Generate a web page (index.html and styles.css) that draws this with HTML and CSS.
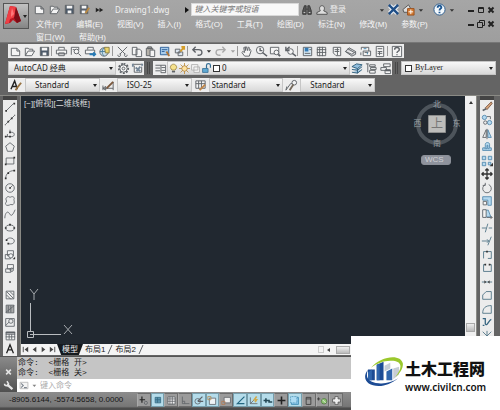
FILE: index.html
```html
<!DOCTYPE html>
<html lang="zh-CN">
<head>
<meta charset="utf-8">
<meta name="viewport" content="width=device-width, initial-scale=1">
<title>Drawing1.dwg</title>
<link rel="stylesheet" href="styles.css">
</head>
<body>
<svg class="sprite" aria-hidden="true">
  <symbol id="new" viewBox="0 0 14 14"><path class="w" d="M2.500 3.500h6l3 3v5h-9zM8.500 3.500v3h3"/></symbol>
  <symbol id="open" viewBox="0 0 14 14"><path class="w" d="M2.500 11.500v-8h3l1 1h4v2M2.500 11.500l3-5h7l-3 5z"/></symbol>
  <symbol id="save" viewBox="0 0 14 14"><path fill="#4c5968" d="M2.500 2.500h9v9h-9z"/><path class="w" stroke="none" d="M4 3h6v3H4zM5 8h4v3H5z"/></symbol>
  <symbol id="saveas" viewBox="0 0 14 14"><path fill="#59616c" d="M2.500 2.500h8v9h-8z"/><path class="w" stroke="none" d="M4 3h5v3H4zM4 8h4v3H4z"/><path stroke="#b98942" stroke-width="2" d="M12 5l-4 6"/></symbol>
  <symbol id="print" viewBox="0 0 14 14"><path class="w" d="M4 5V2.500h6V5M1.500 5.500h11v4h-11zM4 8.500h6v3H4z"/></symbol>
  <symbol id="preview" viewBox="0 0 14 14"><path class="w" d="M2.500 10.500v-8h8v3"/><circle class="w" cx="8" cy="7" r="2.500"/><path d="M10 9l3 3M4 5h2"/></symbol>
  <symbol id="publish" viewBox="0 0 14 14"><path class="w" d="M4 5V2.500h6V5M1.500 5.500h10v4h-10z"/><path stroke="#267ab5" stroke-width="2" d="M6 10h6M10 8l2 2-2 2"/></symbol>
  <symbol id="dwf" viewBox="0 0 14 14"><circle fill="#c7dce8" cx="6.500" cy="7.500" r="4.500"/><path stroke="#4b7e9d" d="M2 7h9M6.500 3c-3 3-2 7 0 9"/><path fill="#ead36b" stroke="#887d45" d="M7 2.500h5v6H8z"/></symbol>
  <symbol id="cut" viewBox="0 0 14 14"><path d="M2 2l8 8M12 2l-8 8M2 10.500a1.500 1.500 0 1 0 2-1M10 9.500a1.500 1.500 0 1 0 2 1"/></symbol>
  <symbol id="copy" viewBox="0 0 14 14"><path class="w" d="M2.500 2.500h5v8h-5zM6.500 4.500h4l2 2v6h-6z"/></symbol>
  <symbol id="paste" viewBox="0 0 14 14"><path fill="#b5b1a9" d="M2.500 3.500h7v8h-7zM4 2h4v2H4z"/><path class="w" d="M6.500 5.500h5v7h-5z"/></symbol>
  <symbol id="match" viewBox="0 0 14 14"><path fill="#a8cceb" stroke="#2c5f98" d="M1.500 2.500h9v8h-9z"/><path stroke="#2c5f98" d="M3 5h6M3 7h3"/><path stroke="#b17535" stroke-width="2" d="M8 7l3 5"/></symbol>
  <symbol id="block" viewBox="0 0 14 14"><path fill="#dce5ef" d="M2.500 4.500h5v4h-5zM5.500 7.500h5v4h-5z"/><path stroke="#d49d29" stroke-width="2" d="M8 7l4-5M9 2h3v3"/></symbol>
  <symbol id="undo" viewBox="0 0 14 14"><path stroke-width="1.500" d="M5 2L2 5l3 3M2 5h6c5 0 5 6 0 6H7"/></symbol>
  <symbol id="redo" viewBox="0 0 14 14"><path stroke="#aaa" stroke-width="1.500" d="M9 2l3 3-3 3M12 5H6C1 5 1 11 6 11h1"/></symbol>
  <symbol id="down" viewBox="0 0 8 14"><path fill="#333" stroke="none" d="M2 6h5L4.500 9z"/></symbol>
  <symbol id="pan" viewBox="0 0 14 14"><path class="w" d="M5 12L2 8l1-1 2 1-1-5 1-1 1 4V2h1l1 4 1-4 1 1v3l1-1 1 1-2 6z"/></symbol>
  <symbol id="zoomrt" viewBox="0 0 14 14"><circle class="w" cx="5.500" cy="5.500" r="4"/><path stroke-width="1.500" d="M8 8l5 4M5.500 3v3H8"/></symbol>
  <symbol id="zoomwin" viewBox="0 0 14 14"><path class="w" d="M1.500 2.500h9v7h-9z"/><circle class="w" cx="8" cy="8" r="2.500"/><path stroke-width="2" d="M10 10l2 2"/></symbol>
  <symbol id="zoomprev" viewBox="0 0 14 14"><circle class="w" cx="7" cy="7" r="3"/><path stroke-width="1.500" d="M9 9l4 3M2 2v4h4M2 6l4-4"/></symbol>
  <symbol id="props" viewBox="0 0 14 14"><path fill="#d7e9f5" d="M2.500 2.500h9v9h-9z"/><path fill="#347bb5" stroke="none" d="M4 3h4v4H4z"/><path d="M4 9h6M9 5h2"/></symbol>
  <symbol id="grid" viewBox="0 0 14 14"><path class="w" d="M2.500 2.500h9v9h-9zM2 5h10M2 8h10M5 2v10M8 2v10"/></symbol>
  <symbol id="palette" viewBox="0 0 14 14"><path class="w" d="M3.500 2.500h8v9h-5l-3-3z"/><path d="M5 5h5M5 7h5M8 3v8"/></symbol>
  <symbol id="sheets" viewBox="0 0 14 14"><path fill="#d5d6d9" d="M1.500 7l4-4 7 4v3l-4 2zM1.500 7l7 3 4-3M4 4l7 4"/></symbol>
  <symbol id="markup" viewBox="0 0 14 14"><path class="w" d="M2.500 5V2.500h8v4M4.500 6.500h8v5h-8zM2 8v3M6 8h4"/><path stroke="#397fac" d="M5 4h3M9 8v2"/></symbol>
  <symbol id="calc" viewBox="0 0 14 14"><path class="w" d="M3.500 1.500h8v11h-8zM5 4h5M5 7h5M5 9h5M7 7v4"/></symbol>
  <symbol id="help" viewBox="0 0 14 14"><path class="w" d="M2.500 1.500h10v11h-10z"/><path stroke-width="1.500" d="M5 5c0-3 5-3 5 0 0 2-2.500 1.500-2.500 3.500M7.500 10v1"/></symbol>
  <symbol id="gear" viewBox="0 0 14 14"><path stroke-width="2" stroke-dasharray="2 1.500" d="M7 2a5 5 0 1 1 0 10A5 5 0 1 1 7 2"/><circle class="w" cx="7" cy="7" r="4"/><circle cx="7" cy="7" r="1.500"/></symbol>
  <symbol id="wsave" viewBox="0 0 14 14"><path class="w" d="M2 2.500h10M3.500 4v7h8V5"/><path stroke="#758798" stroke-width="2" d="M5 6l5 4M10 5l-4 5M2 2v3M12 2v2"/></symbol>
  <symbol id="layers" viewBox="0 0 14 14"><path class="w" d="M1.500 3.500h6M1.500 6.500h5M1.500 9.500h5M7.500 3.500h5v8h-5zM8 6h4M8 9h4"/></symbol>
  <symbol id="layer2" viewBox="0 0 14 14"><path fill="#92bedd" stroke="#35617c" d="M1 5l5-3 6 1-5 4zM1 8l6 1 5-4M1 11l6 1 5-4M7 7v5"/></symbol>
  <symbol id="layer3" viewBox="0 0 14 14"><path class="w" d="M5 3h6v2H5zM6 6h6v2H6zM5 9h6v3H5zM1 2h3M3 2v9"/></symbol>
  <symbol id="layer4" viewBox="0 0 14 14"><path class="w" d="M5 2h7v3H5zM2 6h6v3H2zM6.500 8.500h6v4h-6z"/><path stroke-width="2" d="M7 9h5"/></symbol>
  <symbol id="bulb" viewBox="0 0 14 14"><path fill="#f6e28c" stroke="#99813c" d="M5 9L3 6c0-6 8-6 8 0L9 9z"/><path stroke-width="2" d="M5 11h4"/></symbol>
  <symbol id="sun" viewBox="0 0 14 14"><path stroke="#bb8730" d="M7 0v14M0 7h14M2 2l10 10M12 2L2 12"/><circle fill="#ffe3a0" stroke="#aa8040" cx="7" cy="7" r="3.500"/></symbol>
  <symbol id="vp" viewBox="0 0 14 14"><path class="w" stroke="#aaa" d="M2 2h8v7H2zM5 5h7v7H5z"/></symbol>
  <symbol id="lock" viewBox="0 0 14 14"><path stroke="#356e94" stroke-width="1.500" d="M7 7V3c0-3 5-3 5 0v3"/><path fill="#5fa9d3" stroke="#356e94" d="M2 7h7v5H2z"/></symbol>
  <symbol id="brushA" viewBox="0 0 14 14"><path stroke="#222" stroke-width="1.500" d="M1 11l4-9 3 9M2 8h5"/><path stroke="#987342" stroke-width="2" d="M12 4L8 9M8 9l-2 3"/></symbol>
  <symbol id="dimbrush" viewBox="0 0 14 14"><path d="M1 10h11M1 7v5M12 3v9M1 10l3-2v4z"/><path stroke="#7b583d" stroke-width="2" d="M12 3L7 8l-2 2"/></symbol>
  <symbol id="tablebrush" viewBox="0 0 14 14"><path class="w" d="M2 2h10v8H2zM2 5h10M5 2v8M8 2v8"/><path stroke="#bf8547" stroke-width="2" d="M12 6L8 10l-2 2"/></symbol>
  <symbol id="leader" viewBox="0 0 14 14"><path d="M1 12l5-7h2M1 12l1-4"/><circle class="w" cx="10" cy="4" r="2.500"/><path stroke-width="2" stroke="#75695b" d="M9 6l-4 6"/></symbol>

  <symbol id="line" viewBox="0 0 14 14"><path d="M3 11l8-8"/><path class="dot" d="M1.500 10.500h2v2h-2zM11 2h2v2h-2z"/></symbol>
  <symbol id="xline" viewBox="0 0 14 14"><path d="M2 12L12 2"/><path class="dot" d="M4 8h2v2H4zM8 4h2v2H8zM1 12h1v1H1zM12 1h1v1h-1z"/></symbol>
  <symbol id="pline" viewBox="0 0 14 14"><path d="M2 10h7c4 0 4-5 0-5H7V2M4 7v3"/><path class="dot" d="M1 9h2v2H1zM6 4h2v2H6zM6 9h2v2H6z"/></symbol>
  <symbol id="poly" viewBox="0 0 14 14"><path d="M7 2l5 4-2 6H4L2 6z"/></symbol>
  <symbol id="rect" viewBox="0 0 14 14"><path d="M2.500 3.500h9v7h-9z"/><path class="dot" d="M1 10h2v2H1zM11 2h2v2h-2z"/></symbol>
  <symbol id="arc" viewBox="0 0 14 14"><path d="M2 12c0-5 4-9 10-9"/><path class="dot" d="M1 11h2v2H1zM4 5h2v2H4zM11 2h2v2h-2z"/></symbol>
  <symbol id="circle" viewBox="0 0 14 14"><circle cx="7" cy="7" r="5"/><path d="M7 7l3-3"/><path class="dot" d="M6 6h2v2H6z"/></symbol>
  <symbol id="cloud" viewBox="0 0 14 14"><path d="M3 3c2-2 3-1 4 0 2-2 5-1 5 1-1 2 0 2 0 4 0 3-2 4-4 3-2 1-5 2-6 0-1-2 1-2 1-4-1-2-1-3 0-4z"/></symbol>
  <symbol id="spline" viewBox="0 0 14 14"><path d="M1 12c0-6 3-9 5-6s3 5 7-4"/></symbol>
  <symbol id="ellipse" viewBox="0 0 14 14"><ellipse cx="7" cy="7" rx="5" ry="3.500"/><path class="dot" d="M1 6h2v2H1zM11 6h2v2h-2zM6 2h2v2H6z"/></symbol>
  <symbol id="earc" viewBox="0 0 14 14"><path d="M3 6c1-4 9-3 9 1 0 3-4 4-7 3"/><path class="dot" d="M2 5h2v2H2zM4 9h2v2H4z"/></symbol>
  <symbol id="insert" viewBox="0 0 14 14"><path class="w" d="M4 2h7v6H4zM1.500 6.500h6v5h-6z"/><circle class="w" cx="8" cy="8" r="2.500"/><path class="dot" d="M10 12l3-3v3z"/></symbol>
  <symbol id="make" viewBox="0 0 14 14"><path class="w" d="M4 3h7v5H4zM2 8h6v4H2z"/><circle cx="9" cy="9" r="2"/></symbol>
  <symbol id="point" viewBox="0 0 14 14"><path class="dot" d="M6 6h2v2H6z"/></symbol>
  <symbol id="hatch" viewBox="0 0 14 14"><path d="M2.500 2.500h9v9h-9zM3 7l5 5M3 3l8 8M7 3l4 4"/></symbol>
  <symbol id="grad" viewBox="0 0 14 14"><path fill="#aaa" d="M2.500 2.500h9v9h-9z"/><path d="M5 3v8M8 3v8M2 11L12 3"/></symbol>
  <symbol id="region" viewBox="0 0 14 14"><path d="M2 3h10v9H2z"/><circle cx="8" cy="6" r="2.500"/><path d="M2 11l4-4"/></symbol>
  <symbol id="table" viewBox="0 0 14 14"><path class="w" d="M2.500 2.500h10v9h-10zM2 5h11M2 8h11M6 5v6M9 5v6"/><path stroke-width="2" d="M2 3h11"/></symbol>
  <symbol id="textA" viewBox="0 0 14 14"><path stroke="#222" stroke-width="1.500" d="M3 12L7 2l4 10M5 8h5"/></symbol>

  <symbol id="erase" viewBox="0 0 14 14"><path fill="#d7a37c" stroke="#76533d" d="M12 1L5 8l2 2 6-7z"/><path stroke-width="2" d="M2 11l4-2"/></symbol>
  <symbol id="copyo" viewBox="0 0 14 14"><circle class="b" cx="4" cy="4" r="2.500"/><circle class="b" cx="10" cy="10" r="2.500"/><circle cx="5" cy="10" r="2"/><path d="M7 3h4v3"/></symbol>
  <symbol id="mirror" viewBox="0 0 14 14"><path class="w" d="M6 2v9H2z"/><path class="b" d="M8 2v9h4z"/><path d="M7 1v12"/></symbol>
  <symbol id="offset" viewBox="0 0 14 14"><path class="b" d="M2 11V8h3V4c0-3 5-3 5 0v4h2v3zM4 9h3V5h1v4h2"/></symbol>
  <symbol id="array" viewBox="0 0 14 14"><path class="b" d="M1.500 1.500h4v4h-4zM8.500 1.500h4v4h-4zM1.500 8.500h4v4h-4zM8.500 8.500h3v3h-3z"/><path class="dot" d="M10 13l4-4v4z"/></symbol>
  <symbol id="move" viewBox="0 0 14 14"><path stroke="#333" stroke-width="1.500" d="M7 1v12M1 7h12M5 3l2-2 2 2M5 11l2 2 2-2M3 5L1 7l2 2M11 5l2 2-2 2"/></symbol>
  <symbol id="rotate" viewBox="0 0 14 14"><path d="M5 3a5 5 0 1 0 4 0M5 1v3H2"/></symbol>
  <symbol id="scale" viewBox="0 0 14 14"><path class="b" d="M2 2h10v10H8V6H2z"/><path class="w" d="M2.500 7.500h4v4h-4z"/></symbol>
  <symbol id="stretch" viewBox="0 0 14 14"><path class="b" d="M2.500 2.500h6l3 8h-9z"/><path class="w" d="M2 2h4v9H2z"/><path d="M7 11h6M11 9l2 2-2 2"/></symbol>
  <symbol id="trim" viewBox="0 0 14 14"><path stroke="#4b7083" d="M1 7h5M9 7h4M8 2L5 12"/></symbol>
  <symbol id="extend" viewBox="0 0 14 14"><path stroke="#4b7083" d="M1 7h8M12 2L8 12M7 5l2 2-2 2"/></symbol>
  <symbol id="breakp" viewBox="0 0 14 14"><path stroke="#4b7083" d="M3 11V3h9v8H8"/><path class="dot" d="M6 2h2v2H6z"/></symbol>
  <symbol id="break" viewBox="0 0 14 14"><path stroke="#4b7083" d="M5 3H3v8h9V3h-2"/><path class="dot" d="M4 2h2v2H4zM9 2h2v2H9z"/></symbol>
  <symbol id="join" viewBox="0 0 14 14"><path stroke="#4b7083" d="M1 7h12"/><path class="dot" d="M4 5l2 2-2 2zM10 5L8 7l2 2z"/></symbol>
  <symbol id="chamfer" viewBox="0 0 14 14"><path stroke="#4b7083" d="M2 12V7l4-4h6v9z"/></symbol>
  <symbol id="fillet" viewBox="0 0 14 14"><path stroke="#4b7083" d="M2 12C2 6 5 3 12 3v9z"/></symbol>
  <symbol id="blend" viewBox="0 0 14 14"><path stroke="#376580" stroke-width="1.500" d="M2 3h3v6c2 4 4-4 7-5M2 11h2"/></symbol>
  <symbol id="explode" viewBox="0 0 14 14"><path stroke="#4b7083" d="M2 2l10 10M12 2L2 12M7 1v12"/></symbol>

  <symbol id="infer" viewBox="0 0 14 14"><path stroke="#222" stroke-width="1.500" d="M5 2v8M2 6h7"/><circle cx="10" cy="10" r="2"/></symbol>
  <symbol id="snap" viewBox="0 0 14 14"><path fill="#5893ac" stroke="#376b83" d="M4 3h7v7H4zM4 6h7M7 3v7"/></symbol>
  <symbol id="ortho" viewBox="0 0 14 14"><path d="M3 2v9h9M3 8h3v3"/></symbol>
  <symbol id="polar" viewBox="0 0 14 14"><circle cx="6" cy="8" r="3.500"/><path stroke-width="1.500" d="M6 8l6-6M6 8h7"/></symbol>
  <symbol id="osnap" viewBox="0 0 14 14"><path fill="#eef3f5" d="M3 4h8v8H3z"/><path stroke="#b58b50" d="M1 2h4v4H1z"/></symbol>
  <symbol id="snap3" viewBox="0 0 14 14"><path fill="#eee" d="M4 3h8v7H4z"/><path stroke="#b67c52" d="M1 8h4v4H1z"/></symbol>
  <symbol id="track" viewBox="0 0 14 14"><path stroke="#246781" stroke-width="1.500" d="M12 2L3 11h9"/></symbol>
  <symbol id="ducs" viewBox="0 0 14 14"><path d="M3 3v8h9M3 11l5-5"/><path stroke="#d0a94b" stroke-width="2" d="M11 2L8 6h3L9 9"/></symbol>
  <symbol id="dyn" viewBox="0 0 14 14"><path stroke="#244957" stroke-width="2" d="M2 7h8M5 4v6M8 9h5"/></symbol>
  <symbol id="lwt" viewBox="0 0 14 14"><path stroke="#222" stroke-width="2" d="M2 7h10M7 2v10"/></symbol>
  <symbol id="tpy" viewBox="0 0 14 14"><path fill="#8bc6ea" stroke="#3a87ae" d="M3 3h9v9H3z"/><path fill="#aedcf3" stroke="#3a87ae" stroke-dasharray="1 1" d="M2 2h8v8H2z"/></symbol>
  <symbol id="qp" viewBox="0 0 14 14"><path stroke="#333" d="M4 3h6v9H4zM4 5h6"/></symbol>
  <symbol id="sc" viewBox="0 0 14 14"><path stroke="#333" d="M2 3v4M0 5h4"/><circle fill="#8fc873" stroke="#517444" cx="9" cy="8" r="3.500"/><path stroke="#eee" d="M7 6l4 4"/></symbol>
  <symbol id="am" viewBox="0 0 14 14"><path fill="#eee" stroke="#555" d="M5 2h4v3h3v4H9v3H5V9H2V5h3z"/></symbol>

  <symbol id="min" viewBox="0 0 10 10"><path stroke="#222" stroke-width="2" d="M2 6h6"/></symbol>
  <symbol id="max" viewBox="0 0 10 10"><path stroke="#222" d="M2.500 2.500h5v5h-5zM2 3.500h6"/></symbol>
  <symbol id="restore" viewBox="0 0 10 10"><path stroke="#222" d="M3.500 3V1.500h5v5H7M1.500 3.500h5v5h-5z"/></symbol>
  <symbol id="close" viewBox="0 0 10 10"><path stroke="#222" stroke-width="2" d="M2.500 2.500l5 5M7.500 2.500l-5 5"/></symbol>
  <symbol id="binoc" viewBox="0 0 14 14"><path fill="#555" stroke="#333" d="M2 12V8l2-6h2v10zM8 12V2h2l2 6v4zM6 6h2"/><path stroke="#ddd" d="M3 10h2M9 10h2"/></symbol>
  <symbol id="person" viewBox="0 0 14 14"><path fill="#ddd" stroke="#444" d="M5 8C1 0 13 0 9 8l4 2v2H1v-2z"/></symbol>
  <symbol id="exchange" viewBox="0 0 14 14"><path stroke="#e8eef5" stroke-width="5" d="M3 3l8 8M11 3l-8 8"/><path stroke="#204f87" stroke-width="2.500" d="M2 2l10 10M12 2L2 12"/></symbol>
  <symbol id="a360" viewBox="0 0 14 14"><path fill="#ddd" stroke="#555" d="M1 7l6-5 3 5-3 3H2z"/><path fill="#d47b32" stroke="#9a501c" d="M6 6h7v7H6z"/><path stroke="#fff" d="M9.500 7v5M7 9.500h5"/></symbol>
  <symbol id="q" viewBox="0 0 14 14"><circle fill="#f3f8fc" stroke="#295a8b" cx="7" cy="7" r="6"/><path stroke="#1d5792" stroke-width="2" d="M5 5c0-3 4-3 4 0 0 1-2 1-2 3M7 9.500v1.500"/></symbol>
  <symbol id="wrench" viewBox="0 0 14 14"><path stroke="#e5e5e5" stroke-width="3" d="M5 5l7 6"/><path stroke="#e5e5e5" stroke-width="2" d="M2 4c0 3 5 4 5 0L5 1"/></symbol>
  <symbol id="prompt" viewBox="0 0 14 14"><path class="w" stroke="#aaa" d="M1.500 2.500h11v9h-11z"/><path stroke="#7e8690" stroke-width="1.500" d="M3 4l3 3-3 3M7 10h4"/></symbol>
  <symbol id="first" viewBox="0 0 10 10"><path stroke="#444" d="M2.500 2v6"/><path fill="#444" stroke="none" d="M8 2v6L4 5z"/></symbol>
  <symbol id="prev" viewBox="0 0 10 10"><path fill="#444" stroke="none" d="M7 2v6L3 5z"/></symbol>
  <symbol id="next" viewBox="0 0 10 10"><path fill="#444" stroke="none" d="M3 2v6l4-3z"/></symbol>
  <symbol id="last" viewBox="0 0 10 10"><path stroke="#444" d="M7.500 2v6"/><path fill="#444" stroke="none" d="M2 2v6l4-3z"/></symbol>
</svg>

<div class="app">
  <header class="head">
    <button class="app-btn" aria-label="应用程序菜单">
      <svg class="app-mark" viewBox="0 0 24 24"><path fill="#b91722" stroke="none" d="M1 20L6 2l6 1 5 14-4 2-4-3-3 3z"/><path fill="#ef3f45" stroke="none" d="M6 2l6 1-1 10-5 2-1 4-4 1z"/><path fill="#7d0c16" stroke="none" d="M10 14l3 5 4-2-5-14z"/><path fill="#ff7779" stroke="none" d="M7 9l1-5 2 6-3 3z"/><path fill="#222" stroke="none" d="M19 11h4l-2 3z"/></svg>
    </button>
    <div class="head-main">
      <div class="title-row">
        <div class="quick">
          <button aria-label="新建"><svg><use href="#new"/></svg></button>
          <button aria-label="打开"><svg><use href="#open"/></svg></button>
          <button aria-label="保存"><svg><use href="#save"/></svg></button>
          <button aria-label="另存为"><svg><use href="#saveas"/></svg></button>
          <button aria-label="更多"><svg viewBox="0 0 14 14"><path fill="#222" stroke="none" d="M3 5l4 2.500L3 10zM7 5l4 2.500L7 10z"/></svg></button>
        </div>
        <h1 class="doc">Drawing1.dwg</h1>
        <svg class="play" viewBox="0 0 6 8"><path fill="#111" stroke="none" d="M1 1v6l4-3z"/></svg>
        <input class="search" type="search" aria-label="搜索" placeholder="键入关键字或短语">
        <div class="account">
          <button aria-label="搜索"><svg><use href="#binoc"/></svg></button>
          <button class="login"><svg><use href="#person"/></svg>登录</button>
        </div>
        <div class="services">
          <svg class="tri"><use href="#down"/></svg>
          <button aria-label="Exchange"><svg><use href="#exchange"/></svg></button>
          <button aria-label="A360"><svg><use href="#a360"/></svg></button>
          <svg class="tri"><use href="#down"/></svg>
          <button class="ask" aria-label="帮助"><svg><use href="#q"/></svg></button>
          <svg class="tri"><use href="#down"/></svg>
        </div>
        <div class="win">
          <button aria-label="最小化"><svg><use href="#min"/></svg></button>
          <button aria-label="最大化"><svg><use href="#max"/></svg></button>
          <button aria-label="关闭"><svg><use href="#close"/></svg></button>
        </div>
      </div>
      <div class="menu-row">
        <nav class="menu">
          <a href="#file">文件(F)</a><a href="#edit">编辑(E)</a><a href="#view">视图(V)</a><a href="#insert-menu">插入(I)</a><a href="#format">格式(O)</a><a href="#tools">工具(T)</a><a href="#draw">绘图(D)</a><a href="#dimension">标注(N)</a><a href="#modify">修改(M)</a><a href="#parametric">参数(P)</a><a href="#window">窗口(W)</a><a href="#help-menu">帮助(H)</a>
        </nav>
        <div class="win">
          <button aria-label="最小化图形"><svg><use href="#min"/></svg></button>
          <button aria-label="还原图形"><svg><use href="#restore"/></svg></button>
          <button aria-label="关闭图形"><svg><use href="#close"/></svg></button>
        </div>
      </div>
    </div>
  </header>

  <section class="bars">
    <div class="bar standard">
      <button aria-label="新建"><svg><use href="#new"/></svg></button>
      <button aria-label="打开"><svg><use href="#open"/></svg></button>
      <button aria-label="保存"><svg><use href="#save"/></svg></button>
      <i class="sep"></i>
      <button aria-label="打印"><svg><use href="#print"/></svg></button>
      <button aria-label="打印预览"><svg><use href="#preview"/></svg></button>
      <button aria-label="发布"><svg><use href="#publish"/></svg></button>
      <button aria-label="三维打印"><svg><use href="#dwf"/></svg></button>
      <i class="sep"></i>
      <button aria-label="剪切"><svg><use href="#cut"/></svg></button>
      <button aria-label="复制"><svg><use href="#copy"/></svg></button>
      <button aria-label="粘贴"><svg><use href="#paste"/></svg></button>
      <button aria-label="特性匹配"><svg><use href="#match"/></svg></button>
      <button aria-label="块编辑器"><svg><use href="#block"/></svg></button>
      <i class="sep"></i>
      <button aria-label="放弃"><svg><use href="#undo"/></svg></button>
      <button class="drop" aria-label="放弃列表"><svg><use href="#down"/></svg></button>
      <button aria-label="重做"><svg><use href="#redo"/></svg></button>
      <button class="drop faint" aria-label="重做列表"><svg><use href="#down"/></svg></button>
      <i class="sep"></i>
      <button aria-label="平移"><svg><use href="#pan"/></svg></button>
      <button aria-label="实时缩放"><svg><use href="#zoomrt"/></svg></button>
      <button aria-label="窗口缩放"><svg><use href="#zoomwin"/></svg></button>
      <button aria-label="缩放上一个"><svg><use href="#zoomprev"/></svg></button>
      <i class="sep"></i>
      <button aria-label="特性"><svg><use href="#props"/></svg></button>
      <button aria-label="设计中心"><svg><use href="#grid"/></svg></button>
      <button aria-label="工具选项板"><svg><use href="#palette"/></svg></button>
      <button aria-label="图纸集"><svg><use href="#sheets"/></svg></button>
      <button aria-label="标记集"><svg><use href="#markup"/></svg></button>
      <button aria-label="计算器"><svg><use href="#calc"/></svg></button>
      <i class="sep"></i>
      <button aria-label="帮助"><svg><use href="#help"/></svg></button>
    </div>
    <div class="bar-row">
      <div class="bar workspace">
        <label class="combo"><select aria-label="工作空间"><option>AutoCAD 经典</option></select></label>
        <button aria-label="工作空间设置"><svg><use href="#gear"/></svg></button>
        <button aria-label="我的工作空间"><svg><use href="#wsave"/></svg></button>
      </div>
      <i class="grip"></i>
      <div class="bar layerbar">
        <button aria-label="图层特性"><svg><use href="#layers"/></svg></button>
        <label class="combo layer"><svg><use href="#bulb"/></svg><svg><use href="#sun"/></svg><svg><use href="#vp"/></svg><svg><use href="#lock"/></svg><i class="swatch"></i><select aria-label="图层"><option>0</option></select></label>
        <button aria-label="置为当前"><svg><use href="#layer2"/></svg></button>
        <button aria-label="上一个图层"><svg><use href="#layer3"/></svg></button>
        <button aria-label="图层状态"><svg><use href="#layer4"/></svg></button>
      </div>
      <i class="grip"></i>
      <div class="bar colorbar">
        <label class="combo serif"><i class="swatch"></i><select aria-label="颜色"><option>ByLayer</option></select></label>
      </div>
    </div>
    <div class="bar styles">
      <button aria-label="文字样式"><svg><use href="#brushA"/></svg></button>
      <label class="combo"><select aria-label="文字样式"><option>Standard</option></select></label>
      <button aria-label="标注样式"><svg><use href="#dimbrush"/></svg></button>
      <label class="combo"><select aria-label="标注样式"><option>ISO-25</option></select></label>
      <button aria-label="表格样式"><svg><use href="#tablebrush"/></svg></button>
      <label class="combo near"><select aria-label="表格样式"><option>Standard</option></select></label>
      <button aria-label="多重引线样式"><svg><use href="#leader"/></svg></button>
      <label class="combo"><select aria-label="多重引线样式"><option>Standard</option></select></label>
    </div>
  </section>

  <main class="work">
    <div class="tools">
      <button aria-label="直线"><svg><use href="#line"/></svg></button>
      <button aria-label="构造线"><svg><use href="#xline"/></svg></button>
      <button aria-label="多段线"><svg><use href="#pline"/></svg></button>
      <button aria-label="多边形"><svg><use href="#poly"/></svg></button>
      <button aria-label="矩形"><svg><use href="#rect"/></svg></button>
      <button aria-label="圆弧"><svg><use href="#arc"/></svg></button>
      <button aria-label="圆"><svg><use href="#circle"/></svg></button>
      <button aria-label="修订云线"><svg><use href="#cloud"/></svg></button>
      <button aria-label="样条曲线"><svg><use href="#spline"/></svg></button>
      <button aria-label="椭圆"><svg><use href="#ellipse"/></svg></button>
      <button aria-label="椭圆弧"><svg><use href="#earc"/></svg></button>
      <button aria-label="插入块"><svg><use href="#insert"/></svg></button>
      <button aria-label="创建块"><svg><use href="#make"/></svg></button>
      <button aria-label="点"><svg><use href="#point"/></svg></button>
      <button aria-label="图案填充"><svg><use href="#hatch"/></svg></button>
      <button aria-label="渐变色"><svg><use href="#grad"/></svg></button>
      <button aria-label="面域"><svg><use href="#region"/></svg></button>
      <button aria-label="表格"><svg><use href="#table"/></svg></button>
      <button aria-label="多行文字"><svg><use href="#textA"/></svg></button>
    </div>
    <div class="view">
      <div class="view-top">
        <div class="canvas">
          <p class="vp-label">[−][俯视][二维线框]</p>
          <svg class="ucs" viewBox="0 0 52 52"><path stroke="#b9bdc0" d="M5.500 11v28M8.500 42.500H36M2.500 39.500h6v6h-6zM5 42.500h3"/><path stroke="#a5a9ad" d="M5 -3l4 5 4-5M9 2v6M39 33l8 9M47 33l-8 9"/></svg>
          <div class="cube">
            <svg viewBox="0 0 52 52"><circle cx="26" cy="26" r="19" stroke="#4d545b" stroke-width="4"/><path fill="#bdbdbb" stroke="#8c8d8d" d="M17.500 17.500h17v17h-17z"/></svg>
            <span class="n">北</span><span class="w-side">西</span><b>上</b><span class="e">东</span><span class="s">南</span>
          </div>
          <button class="wcs">WCS</button>
        </div>
        <div class="vscroll"><i class="up"></i><i class="thumb"></i></div>
      </div>
      <div class="tabs">
        <button class="nav" aria-label="第一个"><svg><use href="#first"/></svg></button>
        <button class="nav" aria-label="上一个"><svg><use href="#prev"/></svg></button>
        <button class="nav" aria-label="下一个"><svg><use href="#next"/></svg></button>
        <button class="nav" aria-label="最后一个"><svg><use href="#last"/></svg></button>
        <button class="tab on">模型</button>
        <button class="tab">布局1</button>
        <svg class="slant" viewBox="0 0 6 11"><path d="M1 10L5 1"/></svg>
        <button class="tab">布局2</button>
        <svg class="slant" viewBox="0 0 6 11"><path d="M1 10L5 1"/></svg>
        <div class="hscroll"><i class="box"></i><i class="left"></i><i class="thumb"></i></div>
      </div>
    </div>
    <div class="tools modify">
      <button aria-label="删除"><svg><use href="#erase"/></svg></button>
      <button aria-label="复制对象"><svg><use href="#copyo"/></svg></button>
      <button aria-label="镜像"><svg><use href="#mirror"/></svg></button>
      <button aria-label="偏移"><svg><use href="#offset"/></svg></button>
      <button aria-label="阵列"><svg><use href="#array"/></svg></button>
      <button aria-label="移动"><svg><use href="#move"/></svg></button>
      <button aria-label="旋转"><svg><use href="#rotate"/></svg></button>
      <button aria-label="缩放"><svg><use href="#scale"/></svg></button>
      <button aria-label="拉伸"><svg><use href="#stretch"/></svg></button>
      <button aria-label="修剪"><svg><use href="#trim"/></svg></button>
      <button aria-label="延伸"><svg><use href="#extend"/></svg></button>
      <button aria-label="打断于点"><svg><use href="#breakp"/></svg></button>
      <button aria-label="打断"><svg><use href="#break"/></svg></button>
      <button aria-label="合并"><svg><use href="#join"/></svg></button>
      <button aria-label="倒角"><svg><use href="#chamfer"/></svg></button>
      <button aria-label="圆角"><svg><use href="#fillet"/></svg></button>
      <button aria-label="光顺曲线"><svg><use href="#blend"/></svg></button>
      <button aria-label="分解"><svg><use href="#explode"/></svg></button>
      <button aria-label="绘图次序"><svg><use href="#layer2"/></svg></button>
    </div>
  </main>

  <section class="cmd">
    <div class="cmd-side">
      <button aria-label="关闭命令行"><svg viewBox="0 0 14 14"><path stroke="#e5e5e5" stroke-width="2" d="M4 4l6 6M10 4l-6 6"/></svg></button>
      <button aria-label="自定义"><svg><use href="#wrench"/></svg></button>
    </div>
    <div class="cmd-main">
      <div class="log"><p>命令:  &lt;栅格 开&gt;</p><p>命令:  &lt;栅格 关&gt;</p></div>
      <div class="prompt"><svg><use href="#prompt"/></svg><svg class="tri"><use href="#down"/></svg><input type="text" aria-label="命令" placeholder="键入命令"></div>
    </div>
  </section>

  <footer class="status">
    <output class="coords">-8905.6144, -5574.5658, 0.0000</output>
    <div class="toggles">
      <button aria-label="推断约束"><svg><use href="#infer"/></svg></button>
      <button class="on" aria-label="捕捉模式"><svg><use href="#snap"/></svg></button>
      <button aria-label="栅格显示"><svg><use href="#grid"/></svg></button>
      <button aria-label="正交模式"><svg><use href="#ortho"/></svg></button>
      <button class="on" aria-label="极轴追踪"><svg><use href="#polar"/></svg></button>
      <button class="on" aria-label="对象捕捉"><svg><use href="#osnap"/></svg></button>
      <button aria-label="三维对象捕捉"><svg><use href="#snap3"/></svg></button>
      <button class="on" aria-label="对象捕捉追踪"><svg><use href="#track"/></svg></button>
      <button class="on" aria-label="动态UCS"><svg><use href="#ducs"/></svg></button>
      <button class="on" aria-label="动态输入"><svg><use href="#dyn"/></svg></button>
      <button aria-label="线宽"><svg><use href="#lwt"/></svg></button>
      <button class="on" aria-label="透明度"><svg><use href="#tpy"/></svg></button>
      <button aria-label="快捷特性"><svg><use href="#qp"/></svg></button>
      <button aria-label="选择循环"><svg><use href="#sc"/></svg></button>
      <button aria-label="注释监视器"><svg><use href="#am"/></svg></button>
    </div>
  </footer>

  <aside class="brand">
    <svg viewBox="0 0 42 34"><path fill="#1c4b94" stroke="none" d="M4 14h7v11H4zM13 9l7-3v19h-7z"/><path fill="#2f65ac" stroke="none" d="M4 17l4-3v11H4zM13 9l3-1v17h-3zM23 16l6-3v12h-6z"/><path fill="#c6cdd5" stroke="none" d="M21 10l6-3v6l-6 3zM30 13l6-2v8l-6 5z"/><path fill="#9bc82c" stroke="none" d="M7 12C17 0 38-3 40 8c0 5-3 10-8 14 8-10 7-16-2-17C22 4 14 7 7 12z"/><path fill="#1c4b94" stroke="none" d="M4 14c-7 9-1 17 11 17 7 0 14-3 20-8-6 4-14 6-20 5C4 27 1 22 4 14z"/></svg>
    <div class="brand-text"><strong>土木工程网</strong><span>www.civilcn.com</span></div>
  </aside>
</div>
</body>
</html>
```
FILE: styles.css
```css
* { box-sizing: border-box; }
body { margin: 0; font: 8px/12px "Liberation Sans", "Noto Sans CJK SC", sans-serif; color: #222; }
button, input, select { margin: 0; padding: 0; border: 0; border-radius: 0; background: none; font: inherit; color: inherit; outline: 0; }
button { display: flex; align-items: center; justify-content: center; }
a { color: inherit; text-decoration: none; }
p, h1 { margin: 0; font: inherit; }
svg { display: block; width: 13px; height: 13px; fill: none; stroke: #5e6267; flex: none; }
i { display: block; flex: none; }
.sprite { position: absolute; width: 0; height: 0; }
.w { fill: #f4f4f4; }
.b { fill: #b5d9ef; stroke: #4f87ac; }
.dot { fill: #333; stroke: none; }
.tri { width: 7px; height: 12px; }

.app { position: relative; display: flex; flex-direction: column; height: 100vh; overflow: hidden; background: #646464; }

/* title and menus */
.head { display: flex; flex: none; height: 43px; padding: 3px 4px 0 3px; background: linear-gradient(#a6a6a6, #9e9e9e); border-bottom: 1px solid #777; }
.app-btn { width: 26px; height: 26px; border: 1px solid #555; background: linear-gradient(#c2c2c2, #858585); }
.app-mark { width: 24px; height: 24px; }
.head-main { flex: 1; min-width: 0; padding-left: 3px; }
.title-row { display: flex; align-items: center; height: 13px; color: #f2f2f2; }
.quick { display: flex; gap: 1px; flex: none; }
.quick button { width: 14px; }
.doc { flex: none; margin-left: 9px; font: 8px/12px "Noto Sans", sans-serif; white-space: nowrap; }
.play { width: 6px; height: 8px; margin: 0 1px 0 14px; }
.search { flex: 1; min-width: 0; height: 13px; padding: 0 3px; background: #f8f8f8; font-style: italic; border: 1px solid #d8d8d8; }
.search::placeholder { color: #777; opacity: 1; }
.account { display: flex; gap: 3px; padding-left: 2px; }
.account svg { width: 12px; height: 12px; }
.login { gap: 2px; color: #eee; }
.services { display: flex; align-items: center; margin-left: 32px; gap: 2px; }
.services .ask { margin-left: 7px; }
.win { display: flex; flex: none; margin-left: 11px; }
.win svg { width: 10px; height: 10px; }
.menu-row { display: flex; align-items: flex-start; }
.menu-row .win { margin: 3px 0 0 auto; }
.menu { display: flex; flex-wrap: wrap; column-gap: 14px; margin: 2px 24px 0 4px; line-height: 13px; color: #f5f5f5; font-size: 8px; }

/* toolbars */
.bars { display: flex; flex-direction: column; gap: 3px; flex: none; padding: 1px 4px 3px 8px; }
.bar { display: flex; height: 14px; background: #ededed; }
.bar button { width: 14px; flex: none; }
.standard { width: 396px; }
.standard button { flex: 1; width: auto; min-width: 0; }
.standard .drop { flex: none; width: 9px; }
.drop svg { width: 7px; height: 12px; }
.faint { opacity: .4; }
.sep { width: 3px; border-left: 1px solid #999; margin-top: 2px; margin-bottom: 2px; }
.bar-row { display: flex; gap: 2px; }
.grip { width: 3px; margin: 1px; border: solid #484848; border-width: 0 1px; }
.workspace { width: 136px; }
.layerbar { flex: 1; }
.colorbar { width: 95px; }
.combo { position: relative; display: flex; align-items: center; flex: 1; min-width: 0; background: linear-gradient(#f8f8f8, #d9d9d9); border: 1px solid #c6c6c6; }
.combo::after { content: ""; position: absolute; right: 2px; top: 5px; border: solid transparent; border-width: 3px 2px 0; border-top-color: #222; }
.combo select { flex: 1; min-width: 0; height: 12px; padding-left: 5px; appearance: none; font: 8px/12px "Noto Sans", "Noto Sans CJK SC", sans-serif; }
.combo svg { width: 11px; height: 11px; }
.swatch { width: 7px; height: 7px; border: 1px solid #333; background: #fff; }
.layer .swatch { margin-left: 1px; }
.combo.layer select { padding-left: 2px; }
.combo.serif { padding-left: 3px; }
.combo.serif select { padding-left: 3px; font-family: "Liberation Serif", serif; }
.styles { width: 367px; }
.styles button { width: 17px; }
.styles .combo select { padding-left: 9px; }
.styles .combo.near select { padding-left: 2px; }

/* drawing area */
.work { display: flex; flex: 1; min-height: 0; padding: 0 6px 0 3px; border-top: 1px solid #8a8a85; }
.tools { display: flex; flex-direction: column; width: 14px; flex: none; border-top: 4px solid #444; background: #ececec; }
.tools button { flex: 1; min-height: 0; overflow: hidden; }
.tools svg { width: 12px; height: 12px; }
.view { display: flex; flex-direction: column; flex: 1; min-width: 0; margin: 0 3px 1px 3px; border: solid #8a8a85; border-width: 0 1px; }
.view-top { display: flex; flex: 1; min-height: 0; }
.canvas { position: relative; flex: 1; background: #212830; overflow: hidden; }
.vp-label { padding: 2px 3px; color: #d8dadc; }
.ucs { position: absolute; left: 4px; bottom: 0; width: 52px; height: 52px; overflow: visible; }
.cube { position: absolute; top: 2px; right: 2px; width: 52px; height: 52px; display: grid; grid-template-columns: 13px 1fr 13px; grid-template-rows: 13px 1fr 13px; place-items: center; color: #9aa0a5; }
.cube svg { position: absolute; left: 0; top: 0; width: 52px; height: 52px; }
.cube span, .cube b { position: relative; line-height: 10px; }
.cube b { grid-area: 2 / 2; font-size: 12px; font-weight: 400; color: #777; }
.n { grid-area: 1 / 2; }
.w-side { grid-area: 2 / 1; }
.e { grid-area: 2 / 3; }
.s { grid-area: 3 / 2; }
.wcs { position: absolute; top: 59px; right: 14px; width: 30px; height: 10px; padding-left: 3px; justify-content: flex-start; border: 1px solid #8b8f98; border-radius: 3px; background: #8f939d; color: #d0d1d5; }
.vscroll { display: flex; flex-direction: column; justify-content: space-between; align-items: center; width: 11px; padding: 5px 0 12px; background: #f0f0f0; }
.up { border: solid transparent; border-width: 0 2px 3px; border-bottom-color: #333; }
.thumb { width: 9px; height: 9px; border: 1px solid #aaa; background: linear-gradient(#eee, #bbb); }
.tabs { display: flex; align-items: center; height: 11px; flex: none; background: #f4f4f4; }
.nav { width: 9px; }
.nav svg { width: 9px; height: 9px; }
.tab { height: 11px; padding: 0 2px; line-height: 10px; }
.tab.on { padding: 0 5px; background: #15191e; color: #eee; clip-path: polygon(0 0, 100% 0, 84% 100%, 16% 100%); }
.slant { width: 6px; height: 11px; }
.hscroll { display: flex; align-items: center; flex: 1; gap: 3px; padding-left: 174px; }
.box { width: 6px; height: 7px; border: 1px solid #ccc; }
.left { border: solid transparent; border-width: 2px 3px 2px 0; border-right-color: #444; }
.hscroll .thumb { margin-left: 3px; width: 14px; height: 8px; }

/* command line */
.cmd { display: flex; flex: none; height: 36px; border-top: 1px solid #555; }
.cmd-side { display: flex; flex-direction: column; justify-content: flex-end; align-items: center; gap: 2px; width: 17px; background: linear-gradient(#8a8a8a, #505050); }
.cmd-side svg { width: 11px; height: 12px; }
.cmd-main { display: flex; flex-direction: column; flex: 1; background: #fff; }
.log { height: 22px; padding: 1px; background: #c5c5c5; font: 8px/10px "Liberation Mono", "Noto Sans CJK SC", monospace; white-space: pre; }
.prompt { display: flex; align-items: center; flex: 1; padding-left: 2px; gap: 2px; }
.prompt svg { width: 10px; height: 11px; }
.prompt .tri { width: 6px; opacity: .6; }
.prompt input { flex: 1; min-width: 0; padding-left: 1px; }
.prompt input::placeholder { color: #aaa; opacity: 1; }

/* status bar */
.status { display: flex; align-items: stretch; flex: none; height: 18px; padding: 1px 0 3px 9px; background: linear-gradient(#8c8c8c, #777 80%, #4c4c4c 90%); }
.coords { width: 128px; line-height: 14px; color: #161616; white-space: nowrap; }
.toggles { display: flex; width: 206px; }
.toggles button { flex: 1; min-width: 0; border: 1px solid #6c6c6c; border-left-color: #aaa; background: #9b9b9b; }
.toggles .on { background: #b5dcea; border-color: #769eac; }
.toggles svg { width: 11px; height: 11px; }

/* brand plate over the lower right corner */
.brand { position: absolute; right: 0; bottom: 0; display: flex; align-items: flex-start; width: 149px; height: 74px; padding: 20px 0 0 13px; background: #fff; }
.brand > svg { width: 41px; height: 33px; }
.brand-text { display: flex; flex-direction: column; white-space: nowrap; color: #111; }
.brand strong { font: 900 16px/24px "Noto Sans CJK SC", sans-serif; }
.brand span { font: 600 10px/14px "Noto Sans", sans-serif; }
```
